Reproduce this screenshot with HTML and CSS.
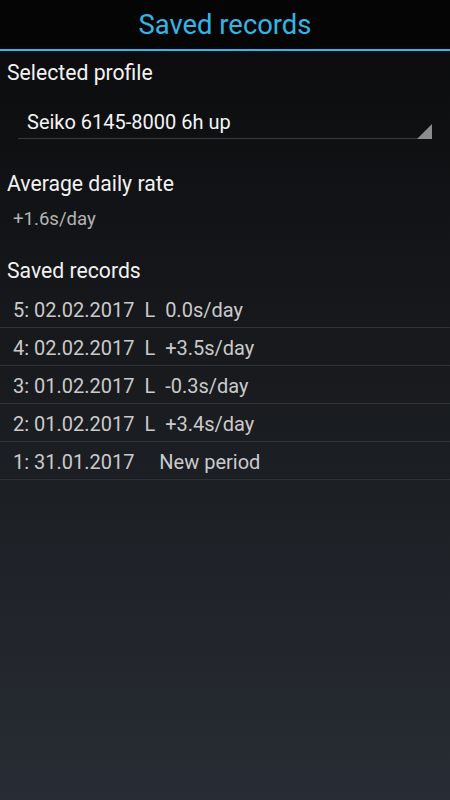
FILE: index.html
```html
<!DOCTYPE html>
<html>
<head>
    <title>Saved records</title>
    <meta charset="utf-8">
    <link rel="stylesheet" href="styles.css">
</head>
<body>
<!--title bar-->
<header class="title-bar">
    <h1>Saved records</h1>
</header>

<main class="content">
    <h2 class="label label-first">Selected profile</h2>
    <div class="spinner">
        <span class="spinner-text">Seiko 6145-8000 6h up</span>
        <svg class="spinner-arrow" width="15" height="15" viewBox="0 0 15 15">
            <polygon points="15,0 15,15 0,15" fill="#8c8c8c"/>
        </svg>
    </div>

    <h2 class="label label-avg">Average daily rate</h2>
    <p class="rate">+1.6s/day</p>

    <h2 class="label label-saved">Saved records</h2>
    <ul class="records">
        <li>5: 02.02.2017  L  0.0s/day</li>
        <li>4: 02.02.2017  L  +3.5s/day</li>
        <li>3: 01.02.2017  L  -0.3s/day</li>
        <li>2: 01.02.2017  L  +3.4s/day</li>
        <li>1: 31.01.2017     New period</li>
    </ul>
</main>
</body>
</html>
```

FILE: styles.css
```css
*{ margin:0; padding:0; }
html, body{
    height:100%;
}
body{
    background:linear-gradient(#0a0a0c 0%, #16181b 40%, #282c34 100%);
    font-family:Roboto, "Noto Sans", sans-serif;
    color:#f2f2f2;
    overflow:hidden;
}
.title-bar{
    height:49px;
    background:#050505;
    border-bottom:2px solid #33b5e5;
}
.title-bar h1{
    font-size:27.4px;
    font-weight:normal;
    line-height:49px;
    padding-top:1px;
    text-align:center;
    color:#33b5e5;
}
.label{
    font-size:21.2px;
    font-weight:normal;
    line-height:26px;
    padding-left:7px;
    color:#f2f2f2;
}
.label-first{
    margin-top:9px;
}
.spinner{
    margin:14px 18px 0;
    padding:10px 0 4px 9px;
    border-bottom:1px solid #3a3b3d;
    display:flex;
    justify-content:space-between;
    align-items:flex-end;
    position:relative;
}
.spinner-text{
    font-size:20px;
    line-height:24px;
    color:#f4f4f4;
}
.spinner-arrow{
    position:absolute;
    right:0;
    bottom:-1px;
}
.label-avg{
    margin-top:32px;
}
.rate{
    font-size:18.6px;
    line-height:24px;
    padding-left:13px;
    margin-top:10px;
    color:#b4b4b4;
}
.label-saved{
    margin-top:27px;
}
.records{
    list-style:none;
    margin-top:6px;
}
.records li{
    font-size:20px;
    line-height:24px;
    padding:8px 0 5px 13px;
    border-bottom:1px solid #2f3237;
    white-space:pre;
    color:#cacaca;
}
```
